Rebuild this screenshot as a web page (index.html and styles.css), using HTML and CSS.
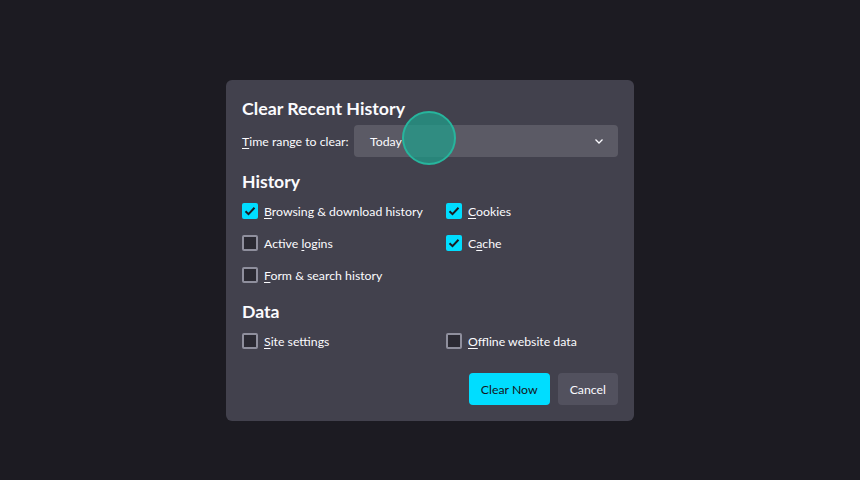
FILE: index.html
```html
<!DOCTYPE html>
<html lang="en">
<head>
    <meta charset="UTF-8">
    <meta name="viewport" content="width=device-width, initial-scale=1.0">
    <title>Clear Recent History</title>
    <link rel="stylesheet" href="styles.css">
</head>
<body>
    <div class="dialog">
        <h1>Clear Recent History</h1>
        <div class="range-row">
            <label class="range-label"><u>T</u>ime range to clear:</label>
            <div class="select">
                <span>Today</span>
                <svg class="chevron" width="12" height="12" viewBox="0 0 12 12">
                    <path d="M2.5 4.5 L6 8 L9.5 4.5" fill="none" stroke="#fbfbfe" stroke-width="1.3"/>
                </svg>
            </div>
            <span class="click-marker"></span>
        </div>

        <h2>History</h2>
        <div class="options">
            <label class="option"><span class="box checked"></span><span><u>B</u>rowsing &amp; download history</span></label>
            <label class="option"><span class="box checked"></span><span><u>C</u>ookies</span></label>
            <label class="option"><span class="box"></span><span>Active <u>l</u>ogins</span></label>
            <label class="option"><span class="box checked"></span><span>C<u>a</u>che</span></label>
            <label class="option"><span class="box"></span><span><u>F</u>orm &amp; search history</span></label>
        </div>

        <h2 class="data-title">Data</h2>
        <div class="options">
            <label class="option"><span class="box"></span><span><u>S</u>ite settings</span></label>
            <label class="option"><span class="box"></span><span><u>O</u>ffline website data</span></label>
        </div>

        <div class="actions">
            <button class="btn primary">Clear Now</button>
            <button class="btn">Cancel</button>
        </div>
    </div>
</body>
</html>
```

FILE: styles.css
```css
html, body {
    height: 100%;
}
body {
    margin: 0;
    background: #1c1b22;
    font-family: Lato, "Open Sans", sans-serif;
    color: #fbfbfe;
    font-size: 12.3px;
}
u {
    text-decoration-thickness: 1px;
    text-underline-offset: 2px;
}
.dialog {
    position: absolute;
    left: 226px;
    top: 80px;
    width: 376px;
    padding: 14px 16px 16px;
    background: #42414d;
    border-radius: 6px;
}
h1 {
    margin: 0;
    font-size: 17.8px;
    font-weight: 700;
    line-height: 28px;
}
h2 {
    margin: 13px 0 1px;
    font-size: 17.6px;
    font-weight: 700;
    line-height: 24px;
}
.data-title {
    margin-top: 9px;
}
.range-row {
    position: relative;
    display: flex;
    align-items: center;
    margin-top: 3px;
}
.range-label {
    width: 104px;
    margin-right: 8px;
    white-space: nowrap;
}
.select {
    flex: 1;
    height: 32px;
    display: flex;
    align-items: center;
    justify-content: space-between;
    padding: 0 13px 0 16px;
    background: #5b5a65;
    border-radius: 4px;
}
.chevron {
    display: block;
}
/* click indicator over the select */
.click-marker {
    position: absolute;
    left: 160px;
    top: -14px;
    width: 50px;
    height: 50px;
    border-radius: 50%;
    background: rgba(32, 160, 140, 0.72);
    border: 2px solid #27b59d;
}
.options {
    display: grid;
    grid-template-columns: 204px 1fr;
    grid-auto-rows: 32px;
}
.option {
    display: flex;
    align-items: center;
    gap: 6px;
    white-space: nowrap;
}
.box {
    box-sizing: border-box;
    width: 16px;
    height: 16px;
    border: 2px solid #8f8f9d;
    border-radius: 2px;
    background: #2b2a33;
}
.box.checked {
    border: none;
    background: #00ddff url("data:image/svg+xml,%3Csvg xmlns='http://www.w3.org/2000/svg' viewBox='0 0 16 16'%3E%3Cpath d='M3.5 8.3 L6.5 11.2 L12.5 4.8' fill='none' stroke='%231c1b22' stroke-width='2'/%3E%3C/svg%3E") center/16px no-repeat;
}
.actions {
    display: flex;
    justify-content: flex-end;
    gap: 8px;
    margin-top: 16px;
}
.btn {
    height: 32px;
    padding: 0 12px;
    border: none;
    border-radius: 4px;
    font-family: inherit;
    font-size: 12.3px;
    color: #fbfbfe;
    background: #52515e;
}
.btn.primary {
    background: #00ddff;
    color: #15141a;
}
```
